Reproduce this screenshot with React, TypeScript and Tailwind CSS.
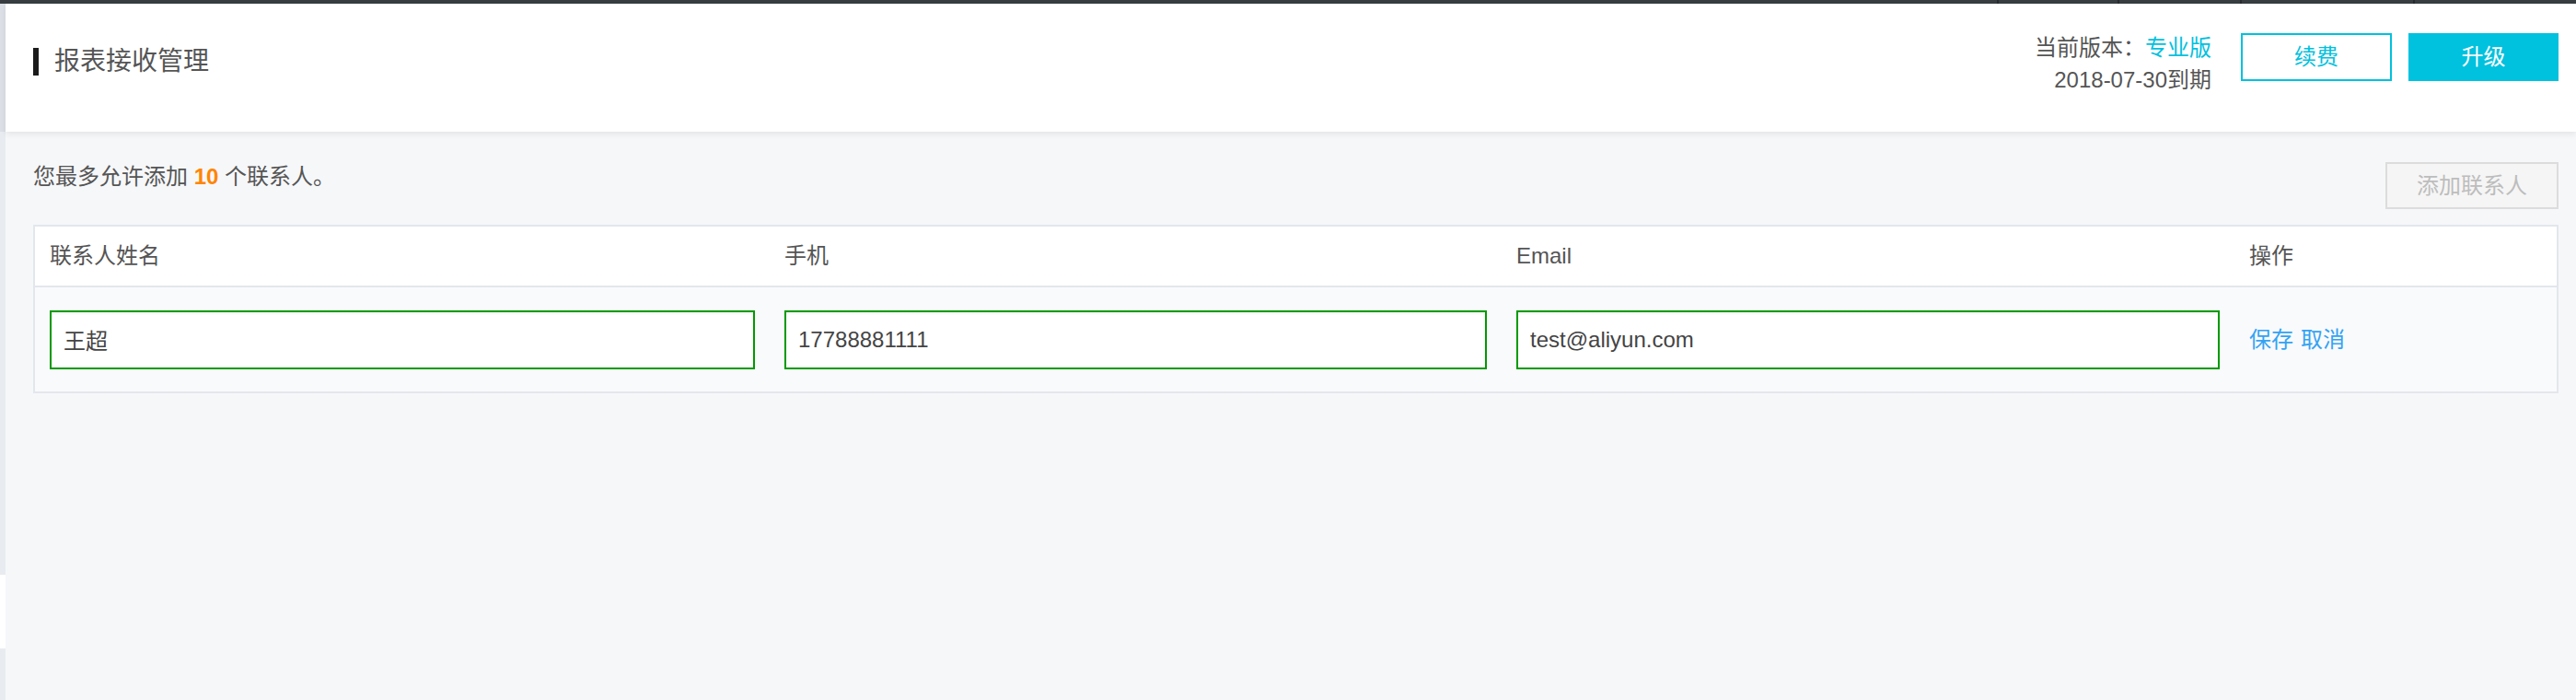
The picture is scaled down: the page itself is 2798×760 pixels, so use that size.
import React from 'react';

const contacts = [{ name: '王超', phone: '17788881111', email: 'test@aliyun.com' }];

export default function App() {
  return (
    <div className="h-[760px] overflow-hidden flex flex-col bg-[#f6f7f9] text-[#555] font-['Liberation_Sans','Noto_Sans_CJK_SC',sans-serif]">
      {/* top nav strip (only its bottom edge is visible) */}
      <div className="h-[4px] bg-[#373d41] flex justify-end">
        <div className="w-[131px] border-l-2 border-[#272b2e]" />
        <div className="w-[133px] border-l-2 border-[#272b2e]" />
        <div className="w-[188px] border-l-2 border-[#272b2e]" />
        <div className="w-[177px] border-l-2 border-[#272b2e]" />
      </div>

      <div className="flex flex-1">
        {/* collapsed sidebar edge */}
        <div className="w-[6px] flex flex-col">
          <div className="h-[139px] bg-[#dcdfe5]" />
          <div className="h-[481px] bg-[#e8ebf0]" />
          <div className="h-[80px] bg-white" />
          <div className="flex-1 bg-[#e8ebf0]" />
        </div>

        <div className="flex-1 flex flex-col">
          {/* Header */}
          <div className="relative z-10 h-[139px] bg-white shadow-[0_3px_6px_rgba(0,0,0,0.07)] pl-[30px] pr-[19px] flex items-start">
            <div className="mt-[48px] flex items-center">
              <span className="w-[6px] h-[30px] bg-[#1b1b1b]" />
              <h1 className="ml-[17px] text-[28px] leading-[30px] text-[#555]">报表接收管理</h1>
            </div>
            <div className="ml-auto flex items-start">
              <div className="mt-[30px] text-right text-[24px] leading-[35px] text-[#555]">
                <div>
                  当前版本：<span className="text-[#00c1de]">专业版</span>
                </div>
                <div>2018-07-30到期</div>
              </div>
              <button className="mt-[32px] ml-[32px] w-[164px] h-[52px] border-2 border-[#00c1de] bg-white text-[24px] text-[#00c1de]">
                续费
              </button>
              <button className="mt-[32px] ml-[18px] w-[163px] h-[52px] bg-[#00c1de] text-[24px] text-white">
                升级
              </button>
            </div>
          </div>

          {/* Body */}
          <div className="pl-[30px] pr-[19px] pt-[31px]">
            <div className="flex justify-between items-start">
              <p className="text-[24px] leading-[36px] text-[#555]">
                您最多允许添加 <span className="font-bold text-[#ff8500]">10</span> 个联系人。
              </p>
              <button
                disabled
                className="mt-[2px] w-[188px] h-[51px] border-2 border-[#dcdcdc] bg-[#f5f5f5] text-[24px] text-[#bdbdbd] cursor-not-allowed"
              >
                添加联系人
              </button>
            </div>

            <div className="mt-[17px] border-2 border-[#e3e7ec]">
              <div className="grid grid-cols-[798px_795px_796px_1fr] h-[66px] items-center bg-white border-b-2 border-[#e3e7ec] text-[24px] text-[#555]">
                <div className="px-4">联系人姓名</div>
                <div className="px-4">手机</div>
                <div className="px-4">Email</div>
                <div className="px-4">操作</div>
              </div>
              {contacts.map((c) => (
                <div key={c.phone} className="grid grid-cols-[798px_795px_796px_1fr] h-[113px] items-center bg-[#f9fafc] text-[24px]">
                  <div className="px-4">
                    <input
                      readOnly
                      value={c.name}
                      className="w-full h-[64px] border-2 border-[#009a00] bg-white pl-[13px] text-[24px] text-[#444] outline-none shadow-[inset_0_2px_2px_rgba(0,0,0,0.05)]"
                    />
                  </div>
                  <div className="px-4">
                    <input
                      readOnly
                      value={c.phone}
                      className="w-full h-[64px] border-2 border-[#009a00] bg-white pl-[13px] text-[24px] text-[#444] outline-none shadow-[inset_0_2px_2px_rgba(0,0,0,0.05)]"
                    />
                  </div>
                  <div className="px-4">
                    <input
                      readOnly
                      value={c.email}
                      className="w-full h-[64px] border-2 border-[#009a00] bg-white pl-[13px] text-[24px] text-[#444] outline-none shadow-[inset_0_2px_2px_rgba(0,0,0,0.05)]"
                    />
                  </div>
                  <div className="px-4 flex gap-[8px] text-[#33a3f4]">
                    <a className="cursor-pointer">保存</a>
                    <a className="cursor-pointer">取消</a>
                  </div>
                </div>
              ))}
            </div>
          </div>
        </div>
      </div>
    </div>
  );
}
